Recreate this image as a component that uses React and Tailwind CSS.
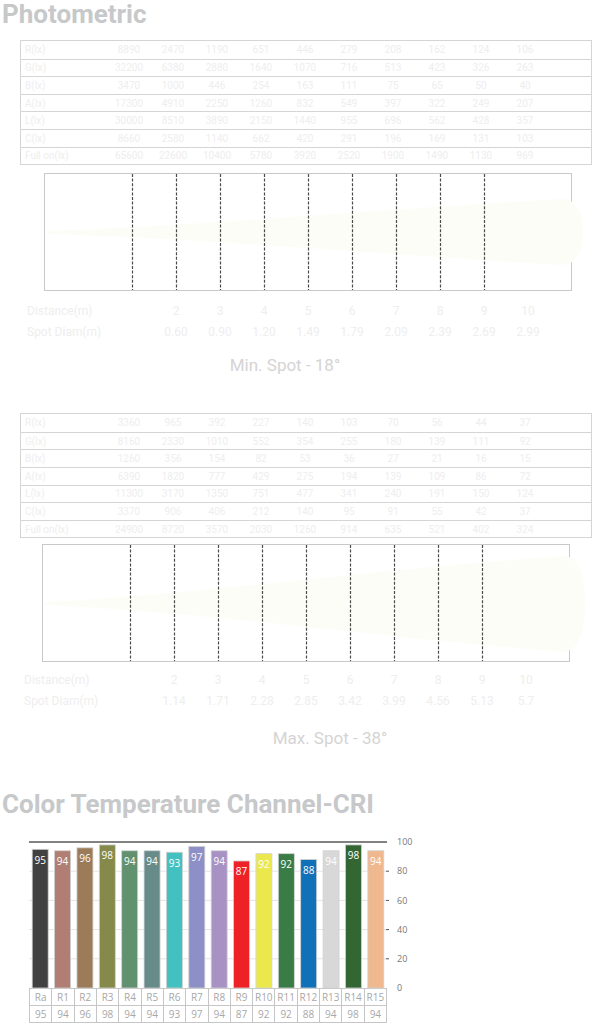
import React from "react";

const T1 = [
  ["R(lx)", [8890, 2470, 1190, 651, 446, 279, 208, 162, 124, 106]],
  ["G(lx)", [32200, 6380, 2880, 1640, 1070, 716, 513, 423, 326, 263]],
  ["B(lx)", [3470, 1000, 446, 254, 163, 111, 75, 65, 50, 40]],
  ["A(lx)", [17300, 4910, 2250, 1260, 832, 549, 397, 322, 249, 207]],
  ["L(lx)", [30000, 8510, 3890, 2150, 1440, 955, 696, 562, 428, 357]],
  ["C(lx)", [8660, 2580, 1140, 662, 420, 291, 196, 169, 131, 103]],
  ["Full on(lx)", [65600, 22600, 10400, 5780, 3920, 2520, 1900, 1490, 1130, 969]],
];

const T2 = [
  ["R(lx)", [3360, 965, 392, 227, 140, 103, 70, 56, 44, 37]],
  ["G(lx)", [8160, 2330, 1010, 552, 354, 255, 180, 139, 111, 92]],
  ["B(lx)", [1260, 356, 154, 82, 53, 36, 27, 21, 16, 15]],
  ["A(lx)", [6390, 1820, 777, 429, 275, 194, 139, 109, 86, 72]],
  ["L(lx)", [11300, 3170, 1350, 751, 477, 341, 240, 191, 150, 124]],
  ["C(lx)", [3370, 906, 406, 212, 140, 95, 91, 55, 42, 37]],
  ["Full on(lx)", [24900, 8720, 3570, 2030, 1260, 914, 635, 521, 402, 324]],
];

const SPOT1 = ["0.60", "0.90", "1.20", "1.49", "1.79", "2.09", "2.39", "2.69", "2.99"];
const SPOT2 = ["1.14", "1.71", "2.28", "2.85", "3.42", "3.99", "4.56", "5.13", "5.7"];

const CRI = [
  ["Ra", 95, "#414141"],
  ["R1", 94, "#b07e72"],
  ["R2", 96, "#9c7b58"],
  ["R3", 98, "#858a4a"],
  ["R4", 94, "#629170"],
  ["R5", 94, "#678b88"],
  ["R6", 93, "#43c1c0"],
  ["R7", 97, "#8c90c6"],
  ["R8", 94, "#a892c4"],
  ["R9", 87, "#ee2126"],
  ["R10", 92, "#ebe84d"],
  ["R11", 92, "#3a7c45"],
  ["R12", 88, "#1070b8"],
  ["R13", 94, "#d8d8d8"],
  ["R14", 98, "#346634"],
  ["R15", 94, "#efb88e"],
];

function LuxTable({ rows, className }) {
  return (
    <div className={className}>
      {rows.map((r, i) => (
        <div
          key={i}
          className={
            i > 0
              ? "flex h-[17.6px] items-center border-t border-[#d5d5d5]"
              : "flex h-[17.6px] items-center"
          }
        >
          <div className="w-[86px] pl-[4px]">{r[0]}</div>
          {r[1].map((v, j) => (
            <div key={j} className="w-[44px] text-center">
              {v}
            </div>
          ))}
        </div>
      ))}
    </div>
  );
}

function BeamBox({ className, beam }) {
  const lines = [0, 1, 2, 3, 4, 5, 6, 7, 8];
  return (
    <div className={className}>
      <svg width="526" height="116" className="block overflow-visible">
        <path d={beam} fill="#fdfdf7" />
        {lines.map((k) => (
          <line
            key={k}
            x1={87.5 + 44 * k}
            x2={87.5 + 44 * k}
            y1="0"
            y2="116"
            stroke="#4a4a4a"
            strokeWidth="1.2"
            strokeDasharray="3 1.6"
          />
        ))}
      </svg>
    </div>
  );
}

function DistRows({ className, labelClass, spots }) {
  const d = [2, 3, 4, 5, 6, 7, 8, 9, 10];
  return (
    <div className={className}>
      <div className="flex h-[21px] items-center">
        <div className={labelClass}>Distance(m)</div>
        {d.map((v) => (
          <div key={v} className="w-[44px] text-center">
            {v}
          </div>
        ))}
      </div>
      <div className="flex h-[21px] items-center">
        <div className={labelClass}>Spot Diam(m)</div>
        {spots.map((v) => (
          <div key={v} className="w-[44px] text-center">
            {v}
          </div>
        ))}
      </div>
    </div>
  );
}

function CriChart() {
  const slot = 358 / 16;
  const base = 152;
  const k = 1.46;
  const grid = [20, 40, 60, 80];
  const axis = [100, 80, 60, 40, 20, 0];
  return (
    <div className="ml-[29px] mt-[17px]">
      <svg width="400" height="152" className="block overflow-visible">
        {grid.map((g) => (
          <line key={g} x1="0" x2="357" y1={base - g * k} y2={base - g * k} stroke="#e4e4e4" strokeWidth="1" />
        ))}
        {grid.map((g) => (
          <line key={"t" + g} x1="357" x2="360" y1={base - g * k} y2={base - g * k} stroke="#555" strokeWidth="1" />
        ))}
        <line x1="0" x2="358" y1={base - 100 * k} y2={base - 100 * k} stroke="#595959" strokeWidth="1.5" />
        {CRI.map(([name, v, c], i) => {
          const x = i * slot + (slot - 16) / 2;
          const top = base - v * k;
          return (
            <g key={name}>
              <rect x={x} y={top} width="16" height={v * k} fill={c} stroke="#d2d2d2" strokeWidth="0.8" />
              <text
                x={x + 8}
                y={top + 14.5}
                textAnchor="middle"
                fontSize="10"
                fill="#ffffff"
                fontFamily="'Open Sans', 'Noto Sans', sans-serif"
              >
                {v}
              </text>
            </g>
          );
        })}
        {axis.map((a) => (
          <text
            key={a}
            x="368"
            y={base - a * k + 3.2}
            fontSize="9"
            fill="#777777"
            fontFamily="'Open Sans', 'Noto Sans', sans-serif"
          >
            {a}
          </text>
        ))}
      </svg>
      <div className="grid w-[358px] grid-cols-16 border-l border-t border-[#c6c6c6] font-['Open_Sans','Noto_Sans',sans-serif] text-[10px] text-[#a8a8a8]">
        {CRI.map(([name]) => (
          <div key={name} className="flex h-[17px] items-center justify-center border-b border-r border-[#c6c6c6]">
            {name}
          </div>
        ))}
        {CRI.map(([name, v]) => (
          <div key={"v" + name} className="flex h-[17px] items-center justify-center border-b border-r border-[#c6c6c6]">
            {v}
          </div>
        ))}
      </div>
    </div>
  );
}

export default function App() {
  return (
    <div className="h-[1024px] w-[610px] overflow-hidden bg-white font-['Roboto',sans-serif]">
      <h1 className="h-[29px] pl-[2px] text-[26px] font-bold leading-[29px] text-[#c6c8ca]">Photometric</h1>

      <LuxTable
        rows={T1}
        className="ml-[20px] mt-[11px] w-[572px] border border-[#d5d5d5] text-[10px] text-[#eeeeee]"
      />

      <BeamBox
        className="ml-[44px] mt-[8px] h-[118px] w-[528px] border border-[#c9c9c9]"
        beam="M2 57 C 150 52, 330 36, 515 25 Q 538 24 538 58 Q 538 92 515 91 C 330 80, 150 64, 2 60 Z"
      />

      <DistRows
        className="ml-[20px] mt-[9px] text-[12px] text-[#eeeeee]"
        labelClass="w-[134px] pl-[7px]"
        spots={SPOT1}
      />

      <div className="mt-[11px] h-[24px] pr-[40px] text-center text-[17px] leading-[24px] text-[#d4d4d4]">
        Min. Spot - 18°
      </div>

      <LuxTable
        rows={T2}
        className="ml-[20px] mt-[36px] w-[572px] border border-[#d5d5d5] text-[10px] text-[#eeeeee]"
      />

      <BeamBox
        className="ml-[42px] mt-[6px] h-[118px] w-[528px] border border-[#c9c9c9]"
        beam="M2 57 C 150 50, 330 24, 520 11 Q 542 10 542 58 Q 542 106 520 107 C 330 92, 150 66, 2 60 Z"
      />

      <DistRows
        className="ml-[18px] mt-[7px] text-[12px] text-[#eeeeee]"
        labelClass="w-[134px] pl-[6px]"
        spots={SPOT2}
      />

      <div className="mt-[15px] h-[24px] pl-[50px] text-center text-[17px] leading-[24px] text-[#d4d4d4]">
        Max. Spot - 38°
      </div>

      <h2 className="mt-[40px] h-[29px] pl-[2px] text-[26px] font-bold leading-[29px] text-[#c6c8ca]">
        Color Temperature Channel-CRI
      </h2>

      <CriChart />
    </div>
  );
}
